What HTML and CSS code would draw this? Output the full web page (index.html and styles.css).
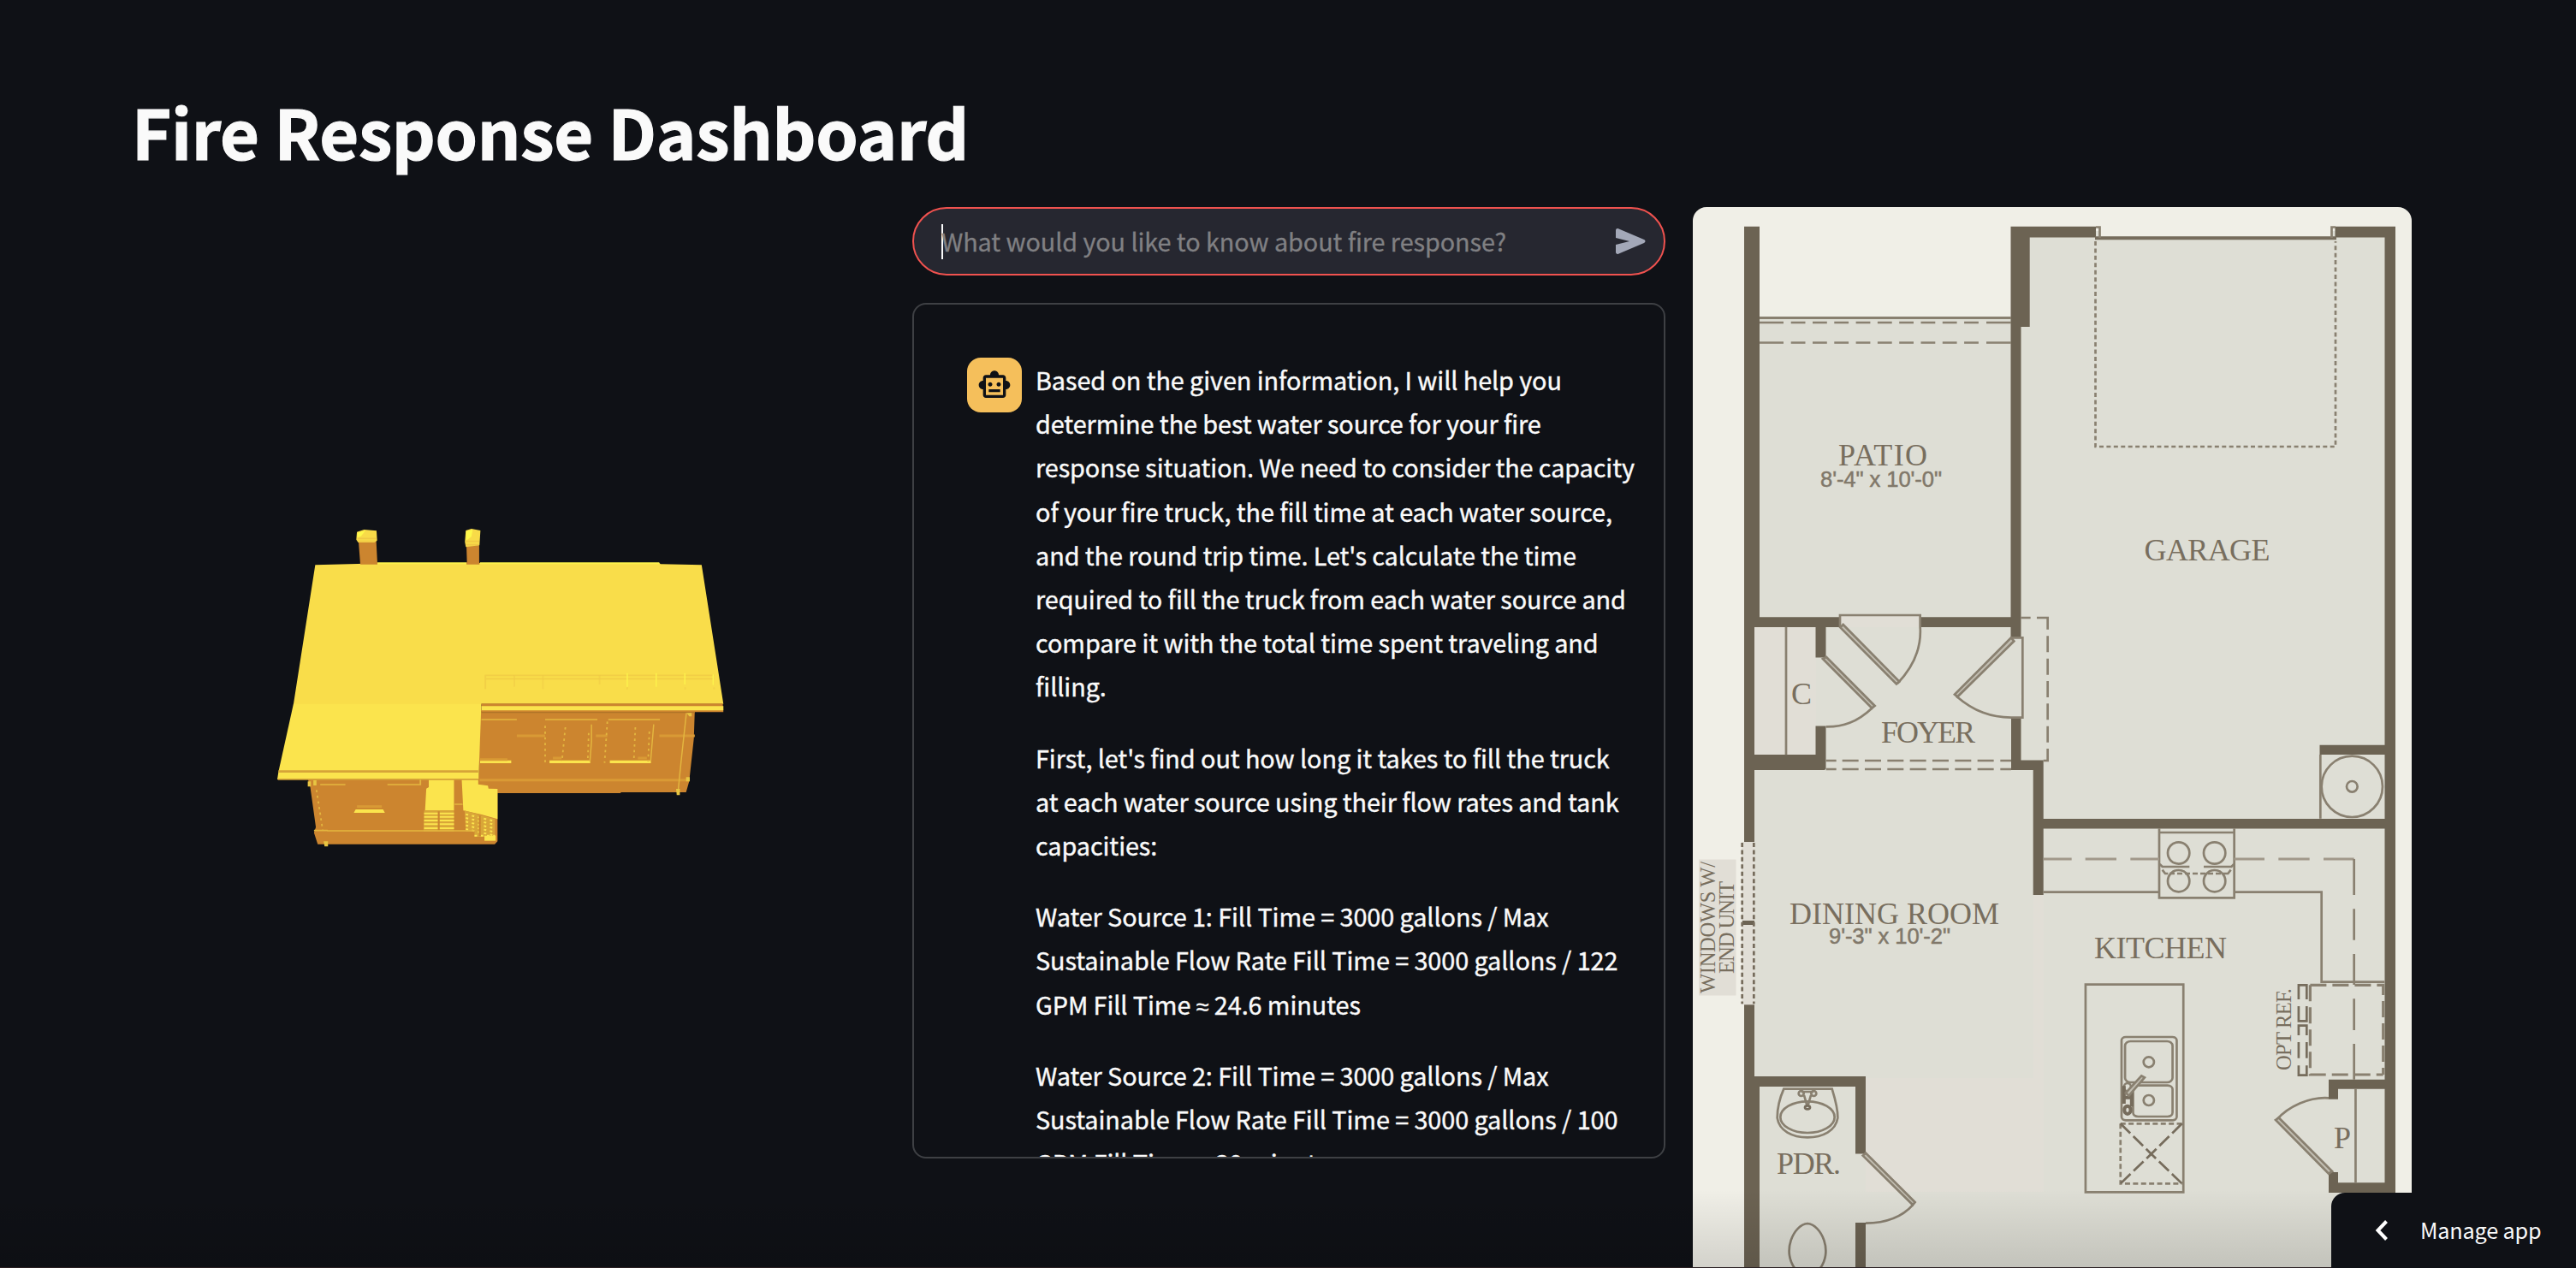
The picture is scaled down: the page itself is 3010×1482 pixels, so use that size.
FILE: index.html
```html
<!DOCTYPE html>
<html lang="en">
<head>
    <meta charset="UTF-8">
    <meta name="viewport" content="width=device-width, initial-scale=1.0">
    <title>Fire Response Dashboard</title>
    <link rel="stylesheet" href="styles.css">
</head>
<body>

    <main class="container">
        <h1>Fire Response Dashboard</h1>

        <div class="columns">
            <!-- 3D house model -->
            <div class="column model">
                <svg class="house" viewBox="0 0 1568 1230" preserveAspectRatio="none">
                    <!-- walls -->
                    <path fill="#cc852f" d="M718 690H1408L1405 790 1390 940 1380 978H1170V981H770L712 950Z"/>
                    <path fill="#cc852f" d="M164 930H716L774 965V1150L765 1160H196L184 1120 190 1100 172 960Z"/>
                    <path fill="#a96f27" d="M722 692H1408V700H722Z"/>
                    <!-- chimneys -->
                    <path fill="#cc852f" d="M327 95H384L388 180H333ZM674 112H715V180H676Z"/>
                    <path fill="#f8db48" d="M322 65L345 57 385 61 387 95 378 102H326L320 92ZM672 60L690 54 719 60 716 112 672 118 669 100Z"/>
                    <path fill="#fdf94b" d="M324 68L350 60 335 80 323 85ZM673 62L694 57 690 82 673 95Z"/>
                    <path class="seam" d="M325 88H384M325 98H380M672 98H715M672 110H714"/>
                    <!-- roof -->
                    <path fill="#f9dd4a" d="M188 181L325 177 388 174H1294L1298 178 1430 181 1500 668H722L720 690 118 670Z"/>
                    <path fill="#fbe44d" d="M118 668H722L713 933H66L70 905Z"/>
                    <path fill="#cc852f" d="M333 172H388V179H333ZM674 172H716V179H674Z"/>
                    <path class="ridge" d="M388 175H674M718 175H1294"/>
                    <path class="seam" d="M735 568H1470M735 580H1470M735 566V616" opacity=".7"/>
                    <path class="ridge thin" d="M1191 560V608M1284 560V608M1376 560V600M1467 565V602"/>
                    <path class="seam" d="M828 568V608M920 568V616M1102 568V600M1191 610V617M1377 610V617M1470 610V617" opacity=".5"/>
                    <path fill="#cc852f" d="M722 667H1498L1500 697H722Z"/>
                    <path fill="#fbe44d" d="M722 676H1500V691H722Z"/>
                    <path fill="#d6a438" d="M70 901H712V909H70ZM68 930H712V935H68Z"/>
                    <!-- right wing windows -->
                    <path class="trim" d="M722 723H836M927 723H1095M1130 723H1296"/>
                    <path class="trim pale" d="M836 780H927M1090 780H1127M1294 780H1408M716 935H1390"/>
                    <path class="sill" d="M718 871H818M941 871H1072M1135 871H1267"/>
                    <path class="trim pale" d="M718 863H806M952 858H980M1225 858H1254"/>
                    <path class="trim thin" d="M1076 740V800L1071 870M1276 740L1266 870M1381 700L1363 880 1354 980"/>
                    <path class="trim dots" d="M927 745V875M992 750L981 870M1067 770L1064 870M1127 730L1118 875M1217 750L1212 870M1262 765L1258 870"/>
                    <path fill="#e7c542" d="M1382 700H1398V712H1390ZM1348 966H1360V988H1350ZM1380 925H1392V940H1380ZM215 1150H229V1168H218Z"/>
                    <!-- left wing and porch -->
                    <path fill="#fbe44d" d="M553 935H634V1042H541L545 965 553 960ZM659 935H712V950L743 955 745 965 774 966V1072L720 1055 664 1042Z"/>
                    <path fill="#d9a638" d="M538 1042H634V1115H536ZM668 1042L766 1072V1146H732V1134H700V1115H672Z"/>
                    <path class="rail" d="M538 1052H634M538 1064H634M538 1077H634M538 1090H634M538 1104H634"/>
                    <path class="rail dots" d="M672 1055L766 1080M672 1068L766 1092M672 1081L766 1105M672 1094L766 1118M672 1107L766 1130M700 1130H766"/>
                    <path stroke="#cc852f" stroke-width="6" d="M585 1045V1112M717 1060V1132"/>
                    <path fill="#fbe44d" d="M732 1130H768V1148H732Z"/>
                    <path class="trim" d="M204 951H285M420 951H526V934M636 1020H662M184 1112H228M226 1113H700"/>
                    <path fill="#e7c542" d="M164 940H174V958H164ZM182 936H192V954H182Z"/>
                    <path class="trim dots" d="M192 970L212 1110"/>
                    <path class="trim pale" d="M322 1028H402"/>
                    <path fill="#fbe44d" d="M318 1038H406L412 1050H312Z"/>
                </svg>
            </div>

            <!-- Chat -->
            <div class="column chat">
                <div class="chat-input">
                    <span class="caret"></span>
                    <span class="placeholder">What would you like to know about fire response?</span>
                    <svg class="send" viewBox="0 0 36 32">
                        <path d="M1 3.200C1 1.500 2.600.6 4 1.200L34 14.100C36 15 36 17 34 17.900L4 30.800C2.600 31.400 1 30.500 1 28.800V20L17 16 1 12Z"/>
                    </svg>
                </div>

                <div class="chat-box">
                    <div class="message">
                        <div class="avatar">
                            <svg viewBox="0 0 24 24">
                                <path d="M20 9V7c0-1.100-.9-2-2-2h-3c0-1.660-1.340-3-3-3S9 3.340 9 5H6c-1.100 0-2 .9-2 2v2c-1.660 0-3 1.340-3 3s1.340 3 3 3v4c0 1.100.9 2 2 2h12c1.100 0 2-.9 2-2v-4c1.660 0 3-1.340 3-3s-1.340-3-3-3zm-2 10H6V7h12v12zm-9-6c-.83 0-1.500-.67-1.500-1.500S8.170 10 9 10s1.500.67 1.500 1.500S9.830 13 9 13zm7.500-1.500c0 .83-.67 1.500-1.500 1.500s-1.500-.67-1.500-1.500.67-1.500 1.500-1.500 1.500.67 1.500 1.500zM8 15h8v2H8v-2z"/>
                            </svg>
                        </div>
                        <div class="message-text">
                            <p>Based on the given information, I will help you determine the best water source for your fire response situation. We need to consider the capacity of your fire truck, the fill time at each water source, and the round trip time. Let's calculate the time required to fill the truck from each water source and compare it with the total time spent traveling and filling.</p>
                            <p>First, let's find out how long it takes to fill the truck at each water source using their flow rates and tank capacities:</p>
                            <p>Water Source 1: Fill Time = 3000 gallons / Max Sustainable Flow Rate Fill Time = 3000 gallons / 122 GPM Fill Time <span class="approx">≈</span> 24.6 minutes</p>
                            <p>Water Source 2: Fill Time = 3000 gallons / Max Sustainable Flow Rate Fill Time = 3000 gallons / 100 GPM Fill Time = 30 minutes</p>
                        </div>
                    </div>
                </div>
            </div>

            <!-- Floor plan -->
            <div class="column">
                <svg class="plan" viewBox="1978 242 840 1240">
                    <rect x="1978" y="242" width="840" height="1240" fill="#f0efe7"/>
                    <path class="floor" d="M2050 370H2350V270H2792V1482H2050Z"/>
                    <path fill="#f0efe7" d="M2454 262H2724V276H2454Z"/>
                    <path class="tint" d="M2050 733H2122V882H2050ZM2150 720H2243V733H2150ZM2376 1046H2388V1260H2376ZM2180 1260H2388V1393H2180ZM1985 1004.500H2028.500V1163.500H1985ZM2035 984H2050V1174H2035Z"/>

                    <!-- walls -->
                    <path class="wall" d="M2038 264.700H2056V721.300H2150V733H2133.500V768.500H2121.500V733H2050V882H2121.500V848.500H2133.500V898.500L2132 900H2050V984H2038Z"/>
                    <path class="wall" d="M2349.500 264.700H2449V277.500H2371.700V382H2361.500V745H2349.500V733H2243.500V721.300H2349.500Z"/>
                    <path class="wall" d="M2728.500 264.700H2799V1394H2721V1370H2732V1382.300H2786.500V1272.700H2732V1284.700H2721V1261.700H2786.500V968.500H2387.700V1046H2375.700V900H2350V838.500H2361.500V888.500H2387.700V957H2786.500V882H2710.500V870.700H2786.500V277.500H2728.500Z"/>
                    <path class="wall" d="M2038 1174.300H2050V1258H2180V1348.500H2168V1270H2056V1482H2038ZM2168 1429H2180V1482H2168ZM2036 1076H2050V1081H2036Z"/>

                    <!-- patio -->
                    <path class="line" stroke-width="3" d="M2056 371.500H2350"/>
                    <path class="line" d="M2056 377H2084M2321 377H2350M2056 400.500H2084M2321 400.500H2350"/>
                    <path class="line" stroke-dasharray="16.800 8.500" d="M2092.700 377H2313M2092.700 400.500H2313"/>

                    <!-- garage door -->
                    <path class="line dark" stroke-width="4" d="M2448 278.300H2730"/>
                    <path class="line" d="M2453.500 278V265.500H2449M2724.500 278V265.500H2729"/>
                    <path class="line" stroke-dasharray="5 3.430" d="M2448.500 282V522H2729V282"/>

                    <!-- foyer and closet -->
                    <g transform="translate(1970 700) scale(.33333)">
                        <path class="line" d="M351 98V547M540 98V57H821V98C826 170 800 235 742 296"/>
                        <path class="leaf" d="M541 100L551 90 748 290 738 298ZM480 210L492 204 662 375 652 383ZM1140 136L1150 148 952 343 942 335Z"/>
                        <path class="line" d="M652 383C600 432 550 449 491 448M948 341C1010 395 1070 415 1140 416H1180V136H1140"/>
                        <path class="line" d="M1174 66H1208M1230 66H1268V107M1253 567H1268V525M491 567H527M1102 567H1140M491 597H527M1102 597H1140"/>
                        <path class="line" stroke-dasharray="19 7.330" d="M1268 130V503M548 567H1084M548 597H1084"/>
                        <path class="line dark" stroke-dasharray="5 3.430" d="M238 855V1420M197 855V1420"/>
                    </g>

                    <!-- kitchen and water heater -->
                    <g transform="translate(2370 850) scale(.33333)">
                        <path class="line" d="M1024 96V320M459 355V598H722V355M459 369H722M53 578H459M722 578H1028V893H1249"/>
                        <circle class="line" cx="1135" cy="208" r="107"/>
                        <circle class="line" cx="1135" cy="208" r="19"/>
                        <circle class="line" cx="527" cy="441" r="38"/>
                        <circle class="line" cx="653" cy="441" r="38"/>
                        <circle class="line" cx="527" cy="539" r="38"/>
                        <circle class="line" cx="653" cy="539" r="38"/>
                        <path class="line" d="M461 480L470 489H565M615 489H712L721 480M470 500L480 513H490M710 500L700 513H690"/>
                        <path class="line" stroke-dasharray="6 3" d="M495 513H690"/>
                        <path class="line pale-line" stroke-width="3" d="M53 462H152M200 462H309M358 462H459M722 462H828M877 462H986M1035 462H1142"/>
                        <path class="line" d="M1142 462V588M1142 637V746M1142 795V903M1142 952V1062M1142 1110V1235"/>
                    </g>

                    <!-- island, refrigerator, pantry -->
                    <g transform="translate(2370 1130) scale(.408163 .333333)">
                        <path class="line" d="M164 62H444V790H164Z"/>
                        <rect class="line" x="267" y="246" width="158" height="292" rx="12"/>
                        <rect class="line" x="277" y="261" width="136" height="144" rx="16"/>
                        <rect class="line" x="300" y="416" width="113" height="109" rx="14"/>
                        <ellipse class="line" cx="345" cy="334" rx="15" ry="18"/>
                        <ellipse class="line" cx="345" cy="468" rx="15" ry="18"/>
                        <ellipse class="line" cx="284" cy="422" rx="10" ry="14"/>
                        <ellipse class="line dark" stroke-width="4" cx="284" cy="502" rx="9" ry="14"/>
                        <path class="line dark" stroke-width="4" d="M274 418V480M296 440V490M276 458H294"/>
                        <path class="leaf" d="M279 442L324 382 333 388 288 452Z"/>
                        <path class="line" stroke-dasharray="6 3.400" d="M264 550H440M264 550V760H440"/>
                        <path class="line dark" stroke-dasharray="16 5" d="M264 550L352 656 440 760M440 550L352 656 264 760"/>
                        <path class="line" stroke-width="3" stroke-dasharray="19 7" d="M807 64H1016V378M807 64V378H1016"/>
                        <path class="line dark" d="M774 114V64H797V114M774 138V190H797V138M774 240V206H797V240M774 346V380H797V346M774 264V320M797 264V320"/>
                        <path class="line" d="M937 428V757M860 460C805 455 745 490 712 535"/>
                        <path class="leaf" d="M708 537L717 529 870 717 860 725Z"/>
                    </g>

                    <!-- powder room -->
                    <g transform="translate(1970 1080) scale(.33333)">
                        <path class="line" d="M343 578H512C525 620 533 650 532 680C525 725 480 748 426 748C372 748 327 725 320 680C320 650 328 612 343 578Z"/>
                        <ellipse class="line" cx="426" cy="677" rx="95" ry="55"/>
                        <circle class="line" cx="404" cy="594" r="9"/>
                        <circle class="line" cx="448" cy="594" r="9"/>
                        <path class="line" d="M404 588H448M414 600L424 635M438 600L428 635"/>
                        <ellipse class="line dark" cx="426" cy="643" rx="9" ry="6"/>
                        <path class="line" d="M388 1215C330 1150 380 1052 426 1050C472 1052 522 1150 464 1215"/>
                        <path class="leaf" d="M620 812L630 803 803 975 795 985Z"/>
                        <path class="line" d="M795 985C755 1030 700 1048 630 1049"/>
                    </g>

                    <!-- room names -->
                    <g class="room">
                        <text x="2148" y="544" textLength="104">PATIO</text>
                        <text x="2505.500" y="655" textLength="147">GARAGE</text>
                        <text x="2093" y="823">C</text>
                        <text x="2198" y="867.700" textLength="110">FOYER</text>
                        <text x="2091" y="1079.700" textLength="245">DINING ROOM</text>
                        <text x="2447" y="1120" textLength="155">KITCHEN</text>
                        <text x="2076" y="1372" textLength="75">PDR.</text>
                        <text x="2727" y="1342">P</text>
                    </g>
                    <g class="room small">
                        <text transform="translate(2003.700 1161) rotate(-90)" textLength="154">WINDOWS W/</text>
                        <text transform="translate(2026 1138) rotate(-90)" textLength="108">END UNIT</text>
                        <text transform="translate(2677 1251) rotate(-90)" textLength="96">OPT REF.</text>
                    </g>
                    <g class="size">
                        <text x="2127" y="568.700" textLength="142">8'-4" x 10'-0"</text>
                        <text x="2137" y="1103" textLength="142">9'-3" x 10'-2"</text>
                    </g>
                </svg>
            </div>
        </div>
    </main>

    <div class="bottom-shade"></div>

    <div class="manage-app">
        <svg viewBox="0 0 16 26"><path d="M13.500 2.500L3.500 13 13.500 23.500"/></svg>
        <span>Manage app</span>
    </div>

</body>
</html>
```
FILE: styles.css
```css
* {
    box-sizing: border-box;
}
body {
    margin: 0;
    height: 1482px;
    overflow: hidden;
    background-color: #0f1116;
    color: #fafafa;
    font-family: "Noto Sans CJK SC", "Noto Sans CJK JP", sans-serif;
    font-size: 28.8px;
    line-height: 51.2px;
    letter-spacing: -0.075px;
}
.container {
    height: 1482px;
    overflow: hidden;
    padding: 100px 152px 0 154px;
}
h1 {
    margin: 0 0 36px;
    font-size: 79.2px;
    font-weight: 700;
    line-height: 106px;
    letter-spacing: -0.3px;
    white-space: nowrap;
    -webkit-text-stroke: 1.2px #fafafa;
}
.columns {
    display: grid;
    grid-template-columns: repeat(3, 880px);
    gap: 32px;
}

/* Model */
.model {
    padding: 358px 0 0 146px;
}
.house {
    display: block;
    width: 570px;
    height: 410px;
}
.seam, .ridge, .trim, .sill, .rail {
    fill: none;
    stroke: #e3b63f;
    stroke-width: 5;
}
.seam {
    stroke: #f0c945;
}
.ridge {
    stroke: #fdf24c;
    stroke-width: 6;
}
.sill {
    stroke: #fbe44d;
    stroke-width: 10;
}
.rail {
    stroke: #fbe44d;
    stroke-width: 6;
}
.pale {
    stroke: #d99a35;
    stroke-width: 9;
}
.thin {
    stroke-width: 4;
}
.dots {
    stroke-dasharray: 8 12;
}

/* Chat */
.chat-input {
    display: flex;
    align-items: center;
    height: 80px;
    padding: 0 21px 0 32px;
    border: 2px solid #f0524f;
    border-radius: 40px;
    background-color: #262730;
}
.caret {
    width: 2px;
    height: 41px;
    margin-right: -2px;
    background-color: #fafafa;
}
.placeholder {
    flex: 1;
    color: #808083;
    white-space: nowrap;
    -webkit-text-stroke: 0.3px #808083;
}
.send {
    width: 36px;
    height: 32px;
    fill: #a3a8b8;
}
.chat-box {
    height: 1000px;
    margin-top: 32px;
    padding: 62px 30px 0 62px;
    overflow: hidden;
    border: 2px solid #3e4044;
    border-radius: 16px;
}
.message {
    display: flex;
    gap: 16px;
}
.avatar {
    display: flex;
    align-items: center;
    justify-content: center;
    flex: none;
    width: 64px;
    height: 64px;
    border-radius: 16px;
    background-color: #f5bf5b;
}
.avatar svg {
    width: 40px;
    height: 40px;
    fill: #0f1116;
}
.message-text {
    width: 702px;
    -webkit-text-stroke: 0.4px #fafafa;
}
.message-text p {
    margin: 0 0 32px;
}
.approx {
    font-family: "Noto Sans", sans-serif;
    font-size: 27px;
    line-height: 1;
}

/* Floor plan */
.plan {
    display: block;
    width: 840px;
    height: 1240px;
    border-radius: 16px 16px 0 0;
    letter-spacing: 0;
}
.floor {
    fill: #deded5;
}
.tint {
    fill: #e1ded6;
}
.wall {
    fill: #6c6353;
}
.line, .leaf {
    fill: none;
    stroke: #898070;
    stroke-width: 2.7px;
    vector-effect: non-scaling-stroke;
}
.line[stroke-width="3"] {
    stroke-width: 3.2px;
}
.line[stroke-width="4"] {
    stroke-width: 4px;
}
.line.dark {
    stroke: #766c5c;
}
.line.pale-line {
    stroke: #a1988a;
}
.leaf {
    fill: #c2beb2;
}
.room {
    fill: #786e5e;
    font-family: "Liberation Serif", serif;
    font-size: 36px;
}
.small {
    font-size: 24.7px;
}
.size {
    fill: #81786a;
    font-family: "Liberation Sans", sans-serif;
    font-size: 25.6px;
    stroke: #81786a;
    stroke-width: 0.5px;
}

/* Footer */
.bottom-shade {
    position: absolute;
    left: 0;
    right: 0;
    bottom: 0;
    height: 92px;
    border-bottom: 1px solid #2a2023;
    background: linear-gradient(rgba(0, 0, 0, 0), rgba(0, 0, 0, 0.12));
}
.manage-app {
    position: absolute;
    right: 0;
    bottom: 0;
    display: flex;
    align-items: center;
    gap: 37px;
    width: 286px;
    height: 88px;
    padding-left: 51px;
    border-top-left-radius: 16px;
    background-color: #0f1116;
    font-size: 25.2px;
    letter-spacing: -0.15px;
}
.manage-app svg {
    width: 16px;
    height: 26px;
    fill: none;
    stroke: #fff;
    stroke-width: 4;
}
```
